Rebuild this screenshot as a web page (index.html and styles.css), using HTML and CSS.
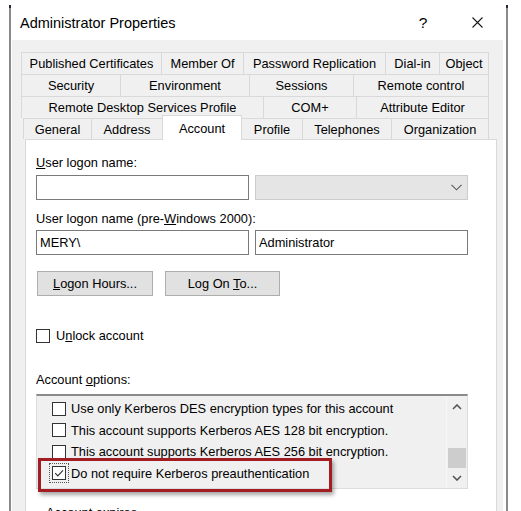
FILE: index.html
```html
<!DOCTYPE html>
<html>
<head>
<meta charset="utf-8">
<title>Administrator Properties</title>
<link rel="stylesheet" href="styles.css">
</head>
<body>
<div class="window">
  <span class="cap cap-left"></span>
  <span class="cap cap-right"></span>
  <div class="titlebar">
    <span class="title">Administrator Properties</span>
    <span class="help">?</span>
    <span class="close">
      <svg width="11" height="11" viewBox="0 0 11 11"><path d="M0.5 0.5 L10.5 10.5 M10.5 0.5 L0.5 10.5" stroke="#1a1a1a" stroke-width="1.1" fill="none"/></svg>
    </span>
  </div>
  <div class="body">
    <div class="tabs">
      <div class="tabrow r1">
        <div class="tab">Published Certificates</div>
        <div class="tab">Member Of</div>
        <div class="tab">Password Replication</div>
        <div class="tab">Dial-in</div>
        <div class="tab">Object</div>
      </div>
      <div class="tabrow r2">
        <div class="tab">Security</div>
        <div class="tab">Environment</div>
        <div class="tab">Sessions</div>
        <div class="tab">Remote control</div>
      </div>
      <div class="tabrow r3">
        <div class="tab">Remote Desktop Services Profile</div>
        <div class="tab">COM+</div>
        <div class="tab">Attribute Editor</div>
      </div>
      <div class="tabrow r4">
        <div class="tab">General</div>
        <div class="tab">Address</div>
        <div class="tab selected">Account</div>
        <div class="tab">Profile</div>
        <div class="tab">Telephones</div>
        <div class="tab">Organization</div>
      </div>
    </div>
    <div class="page">
      <div class="label"><u>U</u>ser logon name:</div>
      <div class="field-row">
        <div class="input"></div>
        <div class="combo">
          <svg width="11" height="7" viewBox="0 0 11 7"><polyline points="0.5,0.8 5.5,5.8 10.5,0.8" stroke="#5a5a5a" stroke-width="1.1" fill="none"/></svg>
        </div>
      </div>
      <div class="label label-2">User logon name (pre-<u>W</u>indows 2000):</div>
      <div class="field-row row-2">
        <div class="input">MERY\</div>
        <div class="input">Administrator</div>
      </div>
      <div class="button-row">
        <div class="btn btn-hours"><span><u>L</u>ogon Hours...</span></div>
        <div class="btn btn-logon"><span>Log On <u>T</u>o...</span></div>
      </div>
      <div class="check-row unlock">
        <span class="box"></span>
        <span>U<u>n</u>lock account</span>
      </div>
      <div class="label label-options">Account <u>o</u>ptions:</div>
      <div class="list">
        <div class="items">
          <div class="item"><span class="box"></span><span>Use only Kerberos DES encryption types for this account</span></div>
          <div class="item"><span class="box"></span><span>This account supports Kerberos AES 128 bit encryption.</span></div>
          <div class="item"><span class="box"></span><span>This account supports Kerberos AES 256 bit encryption.</span></div>
          <div class="item"><span class="box checked focus"><svg width="12" height="12" viewBox="0 0 12 12"><polyline points="2.2,6.2 4.8,8.8 10,3.4" stroke="#333" stroke-width="1.2" fill="none"/></svg></span><span>Do not require Kerberos preauthentication</span></div>
        </div>
        <div class="scroll">
          <div class="arrow">
            <svg width="10" height="6" viewBox="0 0 10 6"><polyline points="1,5 5,1 9,5" stroke="#555" stroke-width="1.6" fill="none"/></svg>
          </div>
          <div class="track"><div class="thumb"></div></div>
          <div class="arrow">
            <svg width="10" height="6" viewBox="0 0 10 6"><polyline points="1,1 5,5 9,1" stroke="#555" stroke-width="1.6" fill="none"/></svg>
          </div>
        </div>
        <div class="highlight"></div>
      </div>
      <div class="group-label">Account expires</div>
    </div>
  </div>
</div>
</body>
</html>
```
FILE: styles.css
```css
* { box-sizing: border-box; }
html, body { margin: 0; padding: 0; background: #ffffff; }
body {
  font-family: "Liberation Sans", Arial, sans-serif;
  font-size: 12.8px;
  color: #000;
  width: 521px;
  height: 511px;
  overflow: hidden;
}
u { text-decoration: underline; text-underline-offset: 1px; }

.window {
  position: relative;
  margin: 5px 0 0 9px;
  width: 499px;
  height: 520px;
  border-left: 2px solid #8a8a8a;
  border-right: 2px solid #8a8a8a;
  background: #fff;
  display: flex;
  flex-direction: column;
}
.cap { position: absolute; top: 0; width: 2px; height: 3px; background: #1e2a3a; }
.cap-left { left: -2px; }
.cap-right { right: -2px; }

.titlebar {
  height: 35px;
  flex: 0 0 35px;
  display: flex;
  align-items: center;
  padding-left: 9px;
}
.title { flex: 1; font-size: 14.5px; }
.help { width: 10px; text-align: center; font-size: 15.5px; }
.close { width: 11px; height: 11px; margin-left: 44px; margin-right: 23px; display: flex; }

.body {
  flex: 1;
  background: #f0f0f0;
  margin: 0 3px 0 1px;
  padding: 12px 0 0 9px;
}

.tabs { width: 468px; }
.tabrow { display: grid; height: 22px; }
.r1 { grid-template-columns: 141px 82px 142px 54px 49px; }
.r2 { grid-template-columns: 100px 129px 104px 135px; }
.r3 { grid-template-columns: 243px 93px 132px; }
.r4 { grid-template-columns: 69px 71px 79px 61px 89px 97px; height: 21px; margin-left: 2px; width: 466px; }
.tab {
  display: flex;
  align-items: center;
  justify-content: center;
  border-top: 1px solid #d9d9d9;
  border-right: 1px solid #d9d9d9;
  background: #f0f0f0;
  white-space: nowrap;
}
.tabrow .tab:first-child { border-left: 1px solid #d9d9d9; }
.tab.selected {
  position: relative;
  z-index: 2;
  margin-top: -3px;
  margin-bottom: -1px;
  margin-left: -1px;
  background: #fff;
  border-left: 1px solid #d9d9d9;
}

.page {
  margin-left: 4px;
  width: 472px;
  height: 400px;
  border: 1px solid #d9d9d9;
  background: #fff;
  padding: 15px 0 0 10px;
}

.label { height: 16px; line-height: 16px; }
.label-2 { margin-top: 11px; }
.field-row { display: flex; gap: 6px; margin-top: 4px; }
.row-2 { margin-top: 3px; }
.input {
  width: 213px;
  height: 25px;
  border: 1px solid #7a7a7a;
  background: #fff;
  padding: 0 3px;
  display: flex;
  align-items: center;
}
.combo {
  width: 213px;
  height: 25px;
  border: 1px solid #cccccc;
  background: #e5e5e5;
  display: flex;
  align-items: center;
  justify-content: flex-end;
  padding-right: 5px;
}

.button-row { display: flex; gap: 12px; margin-top: 16px; margin-left: 1px; }
.btn {
  height: 25px;
  border: 1px solid #adadad;
  background: #e1e1e1;
  display: flex;
  align-items: center;
  justify-content: center;
  white-space: nowrap;
}
.btn-hours { width: 116px; }
.btn-logon { width: 115px; }

.box {
  width: 14px;
  height: 14px;
  flex: 0 0 14px;
  border: 1px solid #333;
  background: #fff;
  display: flex;
  align-items: center;
  justify-content: center;
}
.check-row { display: flex; align-items: center; gap: 6px; height: 15px; }
.unlock { margin-top: 32px; }
.label-options { margin-top: 29px; }

.list {
  position: relative;
  margin-top: 6px;
  width: 432px;
  height: 95px;
  border: 1px solid #dcdcdc;
  border-top: 2px solid #8a8a8a;
  background: #f0f0f0;
  display: flex;
}
.items { flex: 1; padding: 2px 0 0 15px; }
.item { height: 21.5px; display: flex; align-items: center; gap: 5px; white-space: nowrap; }
.box.focus { outline: 1px dotted #555; outline-offset: 2px; }
.scroll {
  width: 21px;
  border-left: 1px solid #f7f7f7;
  display: flex;
  flex-direction: column;
}
.arrow { height: 22px; display: flex; align-items: center; justify-content: center; }
.arrow:last-child { height: 20px; }
.track { flex: 1; display: flex; flex-direction: column; justify-content: flex-end; align-items: center; }
.thumb { width: 18px; height: 20px; background: #cdcdcd; }
.highlight {
  position: absolute;
  left: 1px;
  top: 62px;
  width: 294px;
  height: 34px;
  border: 3px solid #a11d22;
  box-shadow: 2px 3px 4px rgba(0, 0, 0, 0.35);
  pointer-events: none;
}

.group-label { margin-top: 16px; padding-left: 10px; height: 16px; line-height: 16px; }
```
